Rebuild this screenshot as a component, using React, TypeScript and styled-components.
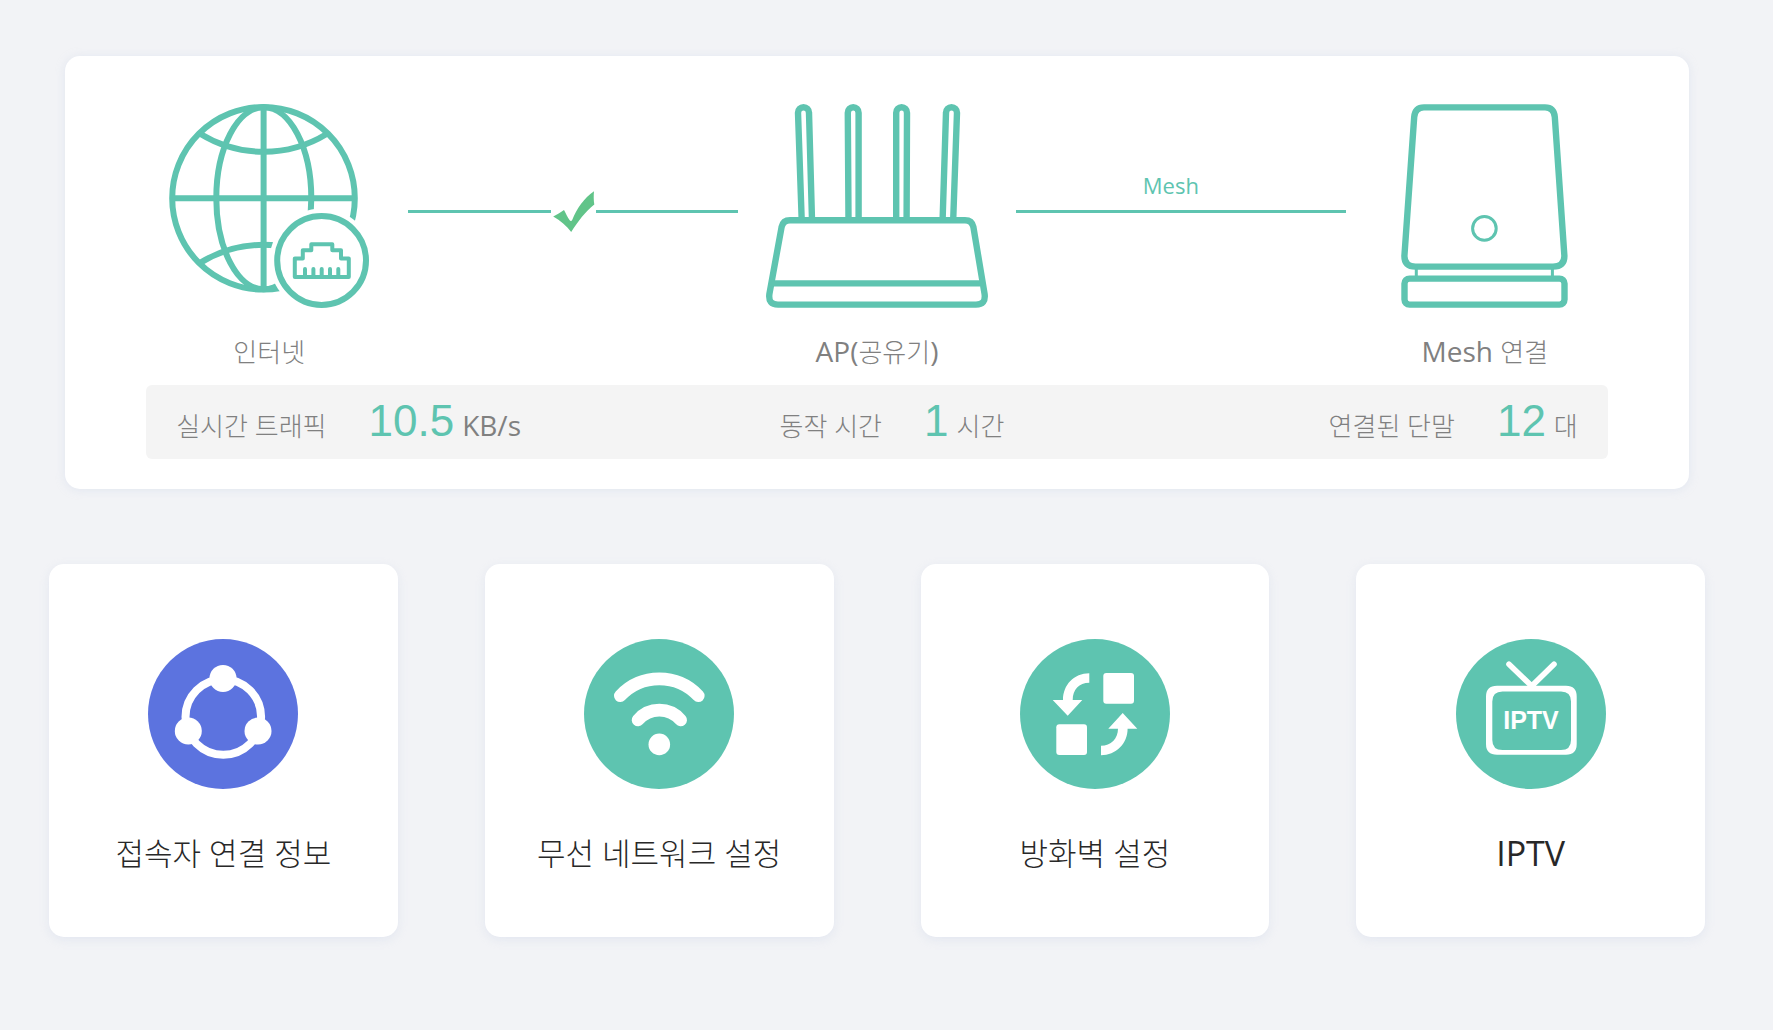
import React from "react";
import styled, { createGlobalStyle } from "styled-components";

const TEAL = "#5ec4b0";

const GlobalStyle = createGlobalStyle`
  *, *::before, *::after { box-sizing: border-box; }
  body {
    margin: 0;
    background: #f2f3f6;
    color: #808080;
    font-family: "Open Sans", "Noto Sans CJK KR Light", "Noto Sans CJK KR", sans-serif;
  }
`;

const Page = styled.main`
  padding: 56px 68px 56px 49px;
`;

const StatusCard = styled.section`
  margin: 0 16px;
  padding: 48px 0 30px;
  border-radius: 15px;
  background: #fff;
  box-shadow: 0 1px 10px rgba(195, 205, 230, 0.35);
`;

const StatusBody = styled.div`
  width: 90%;
  margin: 0 auto;
`;

const Topology = styled.div`
  display: grid;
  grid-template-columns: 246px minmax(60px, 1fr) 246px minmax(60px, 1fr) 246px;
  column-gap: 16px;
`;

const Device = styled.figure`
  margin: 0;
  display: flex;
  flex-direction: column;
  align-items: center;
`;

const DeviceName = styled.figcaption`
  margin-top: 24px;
  font-size: 26px;
  line-height: 40px;
  white-space: nowrap;
`;

const Latin = styled.span`
  font-size: 28px;
  line-height: 28px;
`;

const Link = styled.div`
  display: flex;
  flex-direction: column;
`;

const LinkCaption = styled.div`
  height: 106px;
  padding: 0 20px 10px 0;
  display: flex;
  align-items: flex-end;
  justify-content: center;
  color: ${TEAL};
  font-size: 22px;
  line-height: 30px;
`;

const Track = styled.div`
  height: 3px;
  display: flex;
  align-items: center;
`;

const Line = styled.span`
  flex: 1;
  height: 3px;
  background: ${TEAL};
`;

const Stats = styled.dl`
  margin: 13px 0 0;
  height: 74px;
  padding-top: 3px;
  display: grid;
  grid-template-columns: repeat(3, 1fr);
  align-items: center;
  border-radius: 6px;
  background: #f4f4f4;
`;

const Stat = styled.div<{ $align: string }>`
  padding-left: ${(p) => (p.$align === "flex-end" ? 0 : 30)}px;
  padding-right: ${(p) => (p.$align === "flex-end" ? 30 : 0)}px;
  display: flex;
  align-items: baseline;
  justify-content: ${(p) => p.$align};
  gap: 42px;
  font-size: 26px;
  line-height: 56px;
  white-space: nowrap;
`;

const StatLabel = styled.dt``;

const StatValue = styled.dd`
  margin: 0;
  display: flex;
  align-items: baseline;
  gap: 8px;
`;

const Figure = styled.span`
  color: ${TEAL};
  font-family: "Liberation Sans", Arial, sans-serif;
  font-size: 44px;
`;

const Shortcuts = styled.nav`
  margin-top: 75px;
  display: grid;
  grid-template-columns: repeat(4, 1fr);
  column-gap: 87px;
`;

const Shortcut = styled.a`
  padding: 75px 8px 60px;
  display: flex;
  flex-direction: column;
  align-items: center;
  gap: 40px;
  border-radius: 15px;
  background: #fff;
  box-shadow: 0 3px 10px rgba(195, 205, 230, 0.3);
  color: #282828;
  text-decoration: none;
`;

const ShortcutName = styled.span<{ $latin?: boolean }>`
  font-size: ${(p) => (p.$latin ? 34 : 31)}px;
  line-height: 48px;
  text-align: center;
`;

const GlobeIcon = () => (
  <svg width="200" height="204" viewBox="0 0 200 204" fill="none" stroke={TEAL} strokeWidth="6" aria-hidden="true">
    <circle cx="94.5" cy="94.3" r="91.3" />
    <ellipse cx="94.8" cy="94.3" rx="47.5" ry="91" />
    <path d="M94.6 3V186M3 94.2H186" />
    <path d="M31.5 30A121 121 0 0 0 157.7 30M31.5 158.6A121 121 0 0 1 157.7 158.6" />
    <circle cx="152.6" cy="156.5" r="52" fill="#fff" stroke="none" />
    <circle cx="152.6" cy="156.5" r="44.4" />
    <path
      d="M125.8 173V154.5H133.8V146.3H142.3V140.2H163.3V146.3H172V154.5H179.8V173Z"
      strokeWidth="4"
      strokeLinejoin="round"
    />
    <path d="M136 173V165M144.4 173V165M152.7 173V165M161 173V165M169.3 173V165" strokeWidth="4" strokeLinecap="round" />
  </svg>
);

const RouterIcon = () => (
  <svg width="222" height="204" viewBox="0 0 222 204" fill="none" stroke={TEAL} strokeWidth="6.4" aria-hidden="true">
    <path d="M35.7 116L32 8.7a5.5 5.5 0 0 1 11 0L46 116" />
    <path d="M82.5 116L81.8 8.7a5.4 5.4 0 0 1 10.8 0V116" />
    <path d="M130.2 116V8.7a5.4 5.4 0 0 1 10.8 0L140.6 116" />
    <path d="M176.6 116L180 8.7a5.5 5.5 0 0 1 11 0L187.2 116" />
    <path d="M24 116.2H199Q206 116.2 207.4 123L218.6 190Q220 200.6 210 200.6H12Q2 200.6 3.4 190L15.6 123Q17 116.2 24 116.2Z" />
    <path d="M8 179.4H214" />
  </svg>
);

const MeshIcon = () => (
  <svg width="167" height="204" viewBox="0 0 167 204" fill="none" stroke={TEAL} strokeWidth="6.4" aria-hidden="true">
    <path d="M23 3.4H144Q153 3.4 153.8 13L163.4 152Q163.4 162.6 152 162.6H14.5Q3.4 162.6 3.4 152L13.2 13Q14 3.4 23 3.4Z" />
    <circle cx="83.4" cy="124.4" r="11.8" strokeWidth="3" />
    <path d="M15.3 163V174M151.4 163V174" strokeWidth="3" />
    <rect x="3.5" y="174.6" width="160" height="26" rx="5" />
  </svg>
);

const CheckIcon = () => (
  <svg width="45" height="43" viewBox="0 0 45 43" aria-hidden="true">
    <path
      d="M2.2 26.5C6 24.8 9.5 22.5 13 20C14.8 23.5 16.5 27 18.5 30C19.5 31.5 20.5 31.5 21.3 29.8C25.5 19 33 8 43 1.2C42.6 5.5 42.6 10 43.3 14.6C34.5 21.5 27 31.5 20.2 42C15.5 36 9.5 30.5 2.2 26.5Z"
      fill="#61c489"
    />
  </svg>
);

const Badge = ({ fill, children }: { fill: string; children: React.ReactNode }) => (
  <svg width="150" height="150" viewBox="0 0 150 150" fill="none" stroke="#fff" aria-hidden="true">
    <circle cx="75" cy="75" r="75" fill={fill} stroke="none" />
    {children}
  </svg>
);

const ShareIcon = () => (
  <Badge fill="#5c73df">
    <circle cx="75.3" cy="78" r="37.8" strokeWidth="8" />
    <g fill="#fff" stroke="none">
      <circle cx="75" cy="39.4" r="13.5" />
      <circle cx="40.3" cy="92" r="13.5" />
      <circle cx="110" cy="92" r="13.5" />
    </g>
  </Badge>
);

const WifiIcon = () => (
  <Badge fill={TEAL}>
    <path d="M36.3 56.8A53.5 53.5 0 0 1 114.3 56.8M54 81A28 28 0 0 1 96.7 81" strokeWidth="12.6" strokeLinecap="round" />
    <circle cx="75.3" cy="105.4" r="10.8" fill="#fff" stroke="none" />
  </Badge>
);

const SwapIcon = () => (
  <Badge fill={TEAL}>
    <g fill="#fff" stroke="none">
      <rect x="83.3" y="34" width="30.7" height="30.7" rx="3" />
      <rect x="36.3" y="85.3" width="30.7" height="30.7" rx="3" />
      <path d="M32.7 61H43C43 46 54 34.3 69.3 34.3V43.8C59 43.8 52.7 51 52.7 61H62.3L47.7 76.7Z" />
      <path d="M117.3 89.7H107.6C107.6 104.5 96 116.2 81 116.2V106.7C91 106.7 98 99.5 98 89.7H88.3L102.7 74Z" />
    </g>
  </Badge>
);

const TvIcon = () => (
  <Badge fill={TEAL}>
    <path d="M53 25.3L75.7 47L98 25.3" strokeWidth="5.6" strokeLinecap="round" />
    <path
      d="M41 46.7H110Q120.7 46.7 120.7 57.5V105Q120.7 115.7 110 115.7H41Q30 115.7 30 105V57.5Q30 46.7 41 46.7ZM46.5 52.4Q36.3 52.4 36.3 62.5V101Q36.3 111 46.5 111H105Q115 111 115 101V62.5Q115 52.4 105 52.4Z"
      fill="#fff"
      fillRule="evenodd"
      stroke="none"
    />
    <text
      x="75"
      y="90"
      textAnchor="middle"
      fill="#fff"
      stroke="none"
      fontFamily="Liberation Sans, Arial, sans-serif"
      fontSize="25"
      fontWeight="700"
    >
      IPTV
    </text>
  </Badge>
);

const stats = [
  { label: "실시간 트래픽", value: "10.5", unit: <Latin>KB/s</Latin>, align: "flex-start" },
  { label: "동작 시간", value: "1", unit: "시간", align: "center" },
  { label: "연결된 단말", value: "12", unit: "대", align: "flex-end" },
];

const shortcuts = [
  { href: "#clients", label: "접속자 연결 정보", Icon: ShareIcon },
  { href: "#wireless", label: "무선 네트워크 설정", Icon: WifiIcon },
  { href: "#firewall", label: "방화벽 설정", Icon: SwapIcon },
  { href: "#iptv", label: "IPTV", Icon: TvIcon, latin: true },
];

export default function App() {
  return (
    <>
      <GlobalStyle />
      <Page>
        <StatusCard>
          <StatusBody>
            <Topology>
              <Device>
                <GlobeIcon />
                <DeviceName>인터넷</DeviceName>
              </Device>
              <Link>
                <LinkCaption />
                <Track>
                  <Line />
                  <CheckIcon />
                  <Line />
                </Track>
              </Link>
              <Device>
                <RouterIcon />
                <DeviceName>
                  <Latin>AP(</Latin>공유기<Latin>)</Latin>
                </DeviceName>
              </Device>
              <Link>
                <LinkCaption>Mesh</LinkCaption>
                <Track>
                  <Line />
                </Track>
              </Link>
              <Device>
                <MeshIcon />
                <DeviceName>
                  <Latin>Mesh </Latin>연결
                </DeviceName>
              </Device>
            </Topology>
            <Stats>
              {stats.map((s) => (
                <Stat key={s.label} $align={s.align}>
                  <StatLabel>{s.label}</StatLabel>
                  <StatValue>
                    <Figure>{s.value}</Figure>
                    <span>{s.unit}</span>
                  </StatValue>
                </Stat>
              ))}
            </Stats>
          </StatusBody>
        </StatusCard>
        <Shortcuts>
          {shortcuts.map(({ href, label, Icon, latin }) => (
            <Shortcut key={href} href={href}>
              <Icon />
              <ShortcutName $latin={latin}>{label}</ShortcutName>
            </Shortcut>
          ))}
        </Shortcuts>
      </Page>
    </>
  );
}
